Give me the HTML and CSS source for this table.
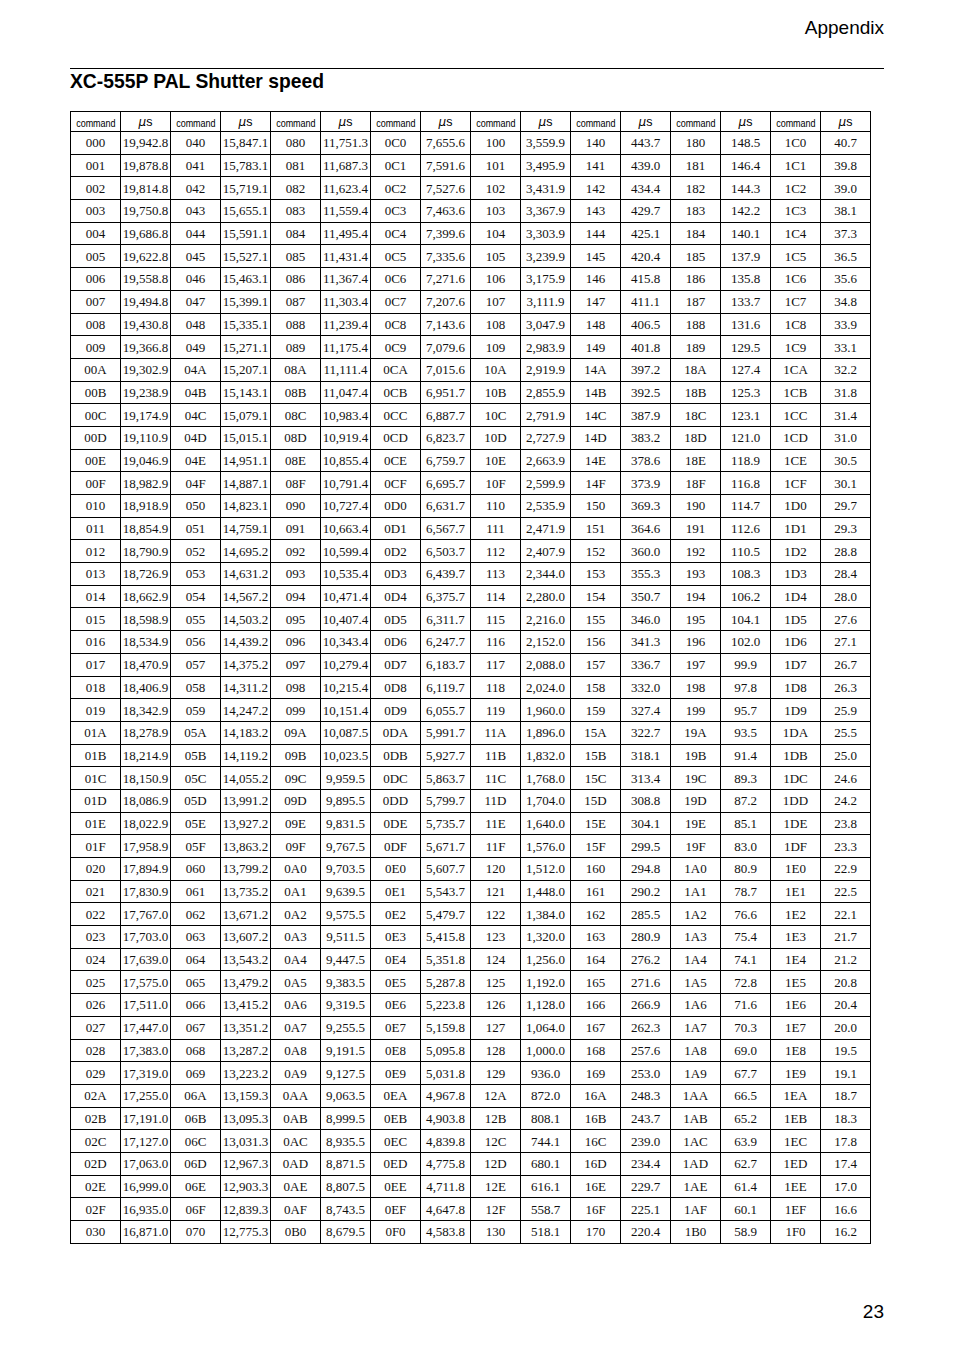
FILE: index.html
```html
<!DOCTYPE html>
<html lang="en">
<head>
<meta charset="utf-8">
<title>XC-555P PAL Shutter speed</title>
<link rel="stylesheet" href="styles.css">
</head>
<body>
<div class="page">
  <header class="running-head">Appendix</header>
  <hr class="rule">
  <h1 class="title">XC-555P PAL Shutter speed</h1>
  <table class="shutter">
    <thead>
      <tr>
        <th><span class="cmd">command</span></th><th class="us"><i>μ</i>s</th>
        <th><span class="cmd">command</span></th><th class="us"><i>μ</i>s</th>
        <th><span class="cmd">command</span></th><th class="us"><i>μ</i>s</th>
        <th><span class="cmd">command</span></th><th class="us"><i>μ</i>s</th>
        <th><span class="cmd">command</span></th><th class="us"><i>μ</i>s</th>
        <th><span class="cmd">command</span></th><th class="us"><i>μ</i>s</th>
        <th><span class="cmd">command</span></th><th class="us"><i>μ</i>s</th>
        <th><span class="cmd">command</span></th><th class="us"><i>μ</i>s</th>
      </tr>
    </thead>
    <tbody>
<tr><td>000</td><td>19,942.8</td><td>040</td><td>15,847.1</td><td>080</td><td>11,751.3</td><td>0C0</td><td>7,655.6</td><td>100</td><td>3,559.9</td><td>140</td><td>443.7</td><td>180</td><td>148.5</td><td>1C0</td><td>40.7</td></tr>
<tr><td>001</td><td>19,878.8</td><td>041</td><td>15,783.1</td><td>081</td><td>11,687.3</td><td>0C1</td><td>7,591.6</td><td>101</td><td>3,495.9</td><td>141</td><td>439.0</td><td>181</td><td>146.4</td><td>1C1</td><td>39.8</td></tr>
<tr><td>002</td><td>19,814.8</td><td>042</td><td>15,719.1</td><td>082</td><td>11,623.4</td><td>0C2</td><td>7,527.6</td><td>102</td><td>3,431.9</td><td>142</td><td>434.4</td><td>182</td><td>144.3</td><td>1C2</td><td>39.0</td></tr>
<tr><td>003</td><td>19,750.8</td><td>043</td><td>15,655.1</td><td>083</td><td>11,559.4</td><td>0C3</td><td>7,463.6</td><td>103</td><td>3,367.9</td><td>143</td><td>429.7</td><td>183</td><td>142.2</td><td>1C3</td><td>38.1</td></tr>
<tr><td>004</td><td>19,686.8</td><td>044</td><td>15,591.1</td><td>084</td><td>11,495.4</td><td>0C4</td><td>7,399.6</td><td>104</td><td>3,303.9</td><td>144</td><td>425.1</td><td>184</td><td>140.1</td><td>1C4</td><td>37.3</td></tr>
<tr><td>005</td><td>19,622.8</td><td>045</td><td>15,527.1</td><td>085</td><td>11,431.4</td><td>0C5</td><td>7,335.6</td><td>105</td><td>3,239.9</td><td>145</td><td>420.4</td><td>185</td><td>137.9</td><td>1C5</td><td>36.5</td></tr>
<tr><td>006</td><td>19,558.8</td><td>046</td><td>15,463.1</td><td>086</td><td>11,367.4</td><td>0C6</td><td>7,271.6</td><td>106</td><td>3,175.9</td><td>146</td><td>415.8</td><td>186</td><td>135.8</td><td>1C6</td><td>35.6</td></tr>
<tr><td>007</td><td>19,494.8</td><td>047</td><td>15,399.1</td><td>087</td><td>11,303.4</td><td>0C7</td><td>7,207.6</td><td>107</td><td>3,111.9</td><td>147</td><td>411.1</td><td>187</td><td>133.7</td><td>1C7</td><td>34.8</td></tr>
<tr><td>008</td><td>19,430.8</td><td>048</td><td>15,335.1</td><td>088</td><td>11,239.4</td><td>0C8</td><td>7,143.6</td><td>108</td><td>3,047.9</td><td>148</td><td>406.5</td><td>188</td><td>131.6</td><td>1C8</td><td>33.9</td></tr>
<tr><td>009</td><td>19,366.8</td><td>049</td><td>15,271.1</td><td>089</td><td>11,175.4</td><td>0C9</td><td>7,079.6</td><td>109</td><td>2,983.9</td><td>149</td><td>401.8</td><td>189</td><td>129.5</td><td>1C9</td><td>33.1</td></tr>
<tr><td>00A</td><td>19,302.9</td><td>04A</td><td>15,207.1</td><td>08A</td><td>11,111.4</td><td>0CA</td><td>7,015.6</td><td>10A</td><td>2,919.9</td><td>14A</td><td>397.2</td><td>18A</td><td>127.4</td><td>1CA</td><td>32.2</td></tr>
<tr><td>00B</td><td>19,238.9</td><td>04B</td><td>15,143.1</td><td>08B</td><td>11,047.4</td><td>0CB</td><td>6,951.7</td><td>10B</td><td>2,855.9</td><td>14B</td><td>392.5</td><td>18B</td><td>125.3</td><td>1CB</td><td>31.8</td></tr>
<tr><td>00C</td><td>19,174.9</td><td>04C</td><td>15,079.1</td><td>08C</td><td>10,983.4</td><td>0CC</td><td>6,887.7</td><td>10C</td><td>2,791.9</td><td>14C</td><td>387.9</td><td>18C</td><td>123.1</td><td>1CC</td><td>31.4</td></tr>
<tr><td>00D</td><td>19,110.9</td><td>04D</td><td>15,015.1</td><td>08D</td><td>10,919.4</td><td>0CD</td><td>6,823.7</td><td>10D</td><td>2,727.9</td><td>14D</td><td>383.2</td><td>18D</td><td>121.0</td><td>1CD</td><td>31.0</td></tr>
<tr><td>00E</td><td>19,046.9</td><td>04E</td><td>14,951.1</td><td>08E</td><td>10,855.4</td><td>0CE</td><td>6,759.7</td><td>10E</td><td>2,663.9</td><td>14E</td><td>378.6</td><td>18E</td><td>118.9</td><td>1CE</td><td>30.5</td></tr>
<tr><td>00F</td><td>18,982.9</td><td>04F</td><td>14,887.1</td><td>08F</td><td>10,791.4</td><td>0CF</td><td>6,695.7</td><td>10F</td><td>2,599.9</td><td>14F</td><td>373.9</td><td>18F</td><td>116.8</td><td>1CF</td><td>30.1</td></tr>
<tr><td>010</td><td>18,918.9</td><td>050</td><td>14,823.1</td><td>090</td><td>10,727.4</td><td>0D0</td><td>6,631.7</td><td>110</td><td>2,535.9</td><td>150</td><td>369.3</td><td>190</td><td>114.7</td><td>1D0</td><td>29.7</td></tr>
<tr><td>011</td><td>18,854.9</td><td>051</td><td>14,759.1</td><td>091</td><td>10,663.4</td><td>0D1</td><td>6,567.7</td><td>111</td><td>2,471.9</td><td>151</td><td>364.6</td><td>191</td><td>112.6</td><td>1D1</td><td>29.3</td></tr>
<tr><td>012</td><td>18,790.9</td><td>052</td><td>14,695.2</td><td>092</td><td>10,599.4</td><td>0D2</td><td>6,503.7</td><td>112</td><td>2,407.9</td><td>152</td><td>360.0</td><td>192</td><td>110.5</td><td>1D2</td><td>28.8</td></tr>
<tr><td>013</td><td>18,726.9</td><td>053</td><td>14,631.2</td><td>093</td><td>10,535.4</td><td>0D3</td><td>6,439.7</td><td>113</td><td>2,344.0</td><td>153</td><td>355.3</td><td>193</td><td>108.3</td><td>1D3</td><td>28.4</td></tr>
<tr><td>014</td><td>18,662.9</td><td>054</td><td>14,567.2</td><td>094</td><td>10,471.4</td><td>0D4</td><td>6,375.7</td><td>114</td><td>2,280.0</td><td>154</td><td>350.7</td><td>194</td><td>106.2</td><td>1D4</td><td>28.0</td></tr>
<tr><td>015</td><td>18,598.9</td><td>055</td><td>14,503.2</td><td>095</td><td>10,407.4</td><td>0D5</td><td>6,311.7</td><td>115</td><td>2,216.0</td><td>155</td><td>346.0</td><td>195</td><td>104.1</td><td>1D5</td><td>27.6</td></tr>
<tr><td>016</td><td>18,534.9</td><td>056</td><td>14,439.2</td><td>096</td><td>10,343.4</td><td>0D6</td><td>6,247.7</td><td>116</td><td>2,152.0</td><td>156</td><td>341.3</td><td>196</td><td>102.0</td><td>1D6</td><td>27.1</td></tr>
<tr><td>017</td><td>18,470.9</td><td>057</td><td>14,375.2</td><td>097</td><td>10,279.4</td><td>0D7</td><td>6,183.7</td><td>117</td><td>2,088.0</td><td>157</td><td>336.7</td><td>197</td><td>99.9</td><td>1D7</td><td>26.7</td></tr>
<tr><td>018</td><td>18,406.9</td><td>058</td><td>14,311.2</td><td>098</td><td>10,215.4</td><td>0D8</td><td>6,119.7</td><td>118</td><td>2,024.0</td><td>158</td><td>332.0</td><td>198</td><td>97.8</td><td>1D8</td><td>26.3</td></tr>
<tr><td>019</td><td>18,342.9</td><td>059</td><td>14,247.2</td><td>099</td><td>10,151.4</td><td>0D9</td><td>6,055.7</td><td>119</td><td>1,960.0</td><td>159</td><td>327.4</td><td>199</td><td>95.7</td><td>1D9</td><td>25.9</td></tr>
<tr><td>01A</td><td>18,278.9</td><td>05A</td><td>14,183.2</td><td>09A</td><td>10,087.5</td><td>0DA</td><td>5,991.7</td><td>11A</td><td>1,896.0</td><td>15A</td><td>322.7</td><td>19A</td><td>93.5</td><td>1DA</td><td>25.5</td></tr>
<tr><td>01B</td><td>18,214.9</td><td>05B</td><td>14,119.2</td><td>09B</td><td>10,023.5</td><td>0DB</td><td>5,927.7</td><td>11B</td><td>1,832.0</td><td>15B</td><td>318.1</td><td>19B</td><td>91.4</td><td>1DB</td><td>25.0</td></tr>
<tr><td>01C</td><td>18,150.9</td><td>05C</td><td>14,055.2</td><td>09C</td><td>9,959.5</td><td>0DC</td><td>5,863.7</td><td>11C</td><td>1,768.0</td><td>15C</td><td>313.4</td><td>19C</td><td>89.3</td><td>1DC</td><td>24.6</td></tr>
<tr><td>01D</td><td>18,086.9</td><td>05D</td><td>13,991.2</td><td>09D</td><td>9,895.5</td><td>0DD</td><td>5,799.7</td><td>11D</td><td>1,704.0</td><td>15D</td><td>308.8</td><td>19D</td><td>87.2</td><td>1DD</td><td>24.2</td></tr>
<tr><td>01E</td><td>18,022.9</td><td>05E</td><td>13,927.2</td><td>09E</td><td>9,831.5</td><td>0DE</td><td>5,735.7</td><td>11E</td><td>1,640.0</td><td>15E</td><td>304.1</td><td>19E</td><td>85.1</td><td>1DE</td><td>23.8</td></tr>
<tr><td>01F</td><td>17,958.9</td><td>05F</td><td>13,863.2</td><td>09F</td><td>9,767.5</td><td>0DF</td><td>5,671.7</td><td>11F</td><td>1,576.0</td><td>15F</td><td>299.5</td><td>19F</td><td>83.0</td><td>1DF</td><td>23.3</td></tr>
<tr><td>020</td><td>17,894.9</td><td>060</td><td>13,799.2</td><td>0A0</td><td>9,703.5</td><td>0E0</td><td>5,607.7</td><td>120</td><td>1,512.0</td><td>160</td><td>294.8</td><td>1A0</td><td>80.9</td><td>1E0</td><td>22.9</td></tr>
<tr><td>021</td><td>17,830.9</td><td>061</td><td>13,735.2</td><td>0A1</td><td>9,639.5</td><td>0E1</td><td>5,543.7</td><td>121</td><td>1,448.0</td><td>161</td><td>290.2</td><td>1A1</td><td>78.7</td><td>1E1</td><td>22.5</td></tr>
<tr><td>022</td><td>17,767.0</td><td>062</td><td>13,671.2</td><td>0A2</td><td>9,575.5</td><td>0E2</td><td>5,479.7</td><td>122</td><td>1,384.0</td><td>162</td><td>285.5</td><td>1A2</td><td>76.6</td><td>1E2</td><td>22.1</td></tr>
<tr><td>023</td><td>17,703.0</td><td>063</td><td>13,607.2</td><td>0A3</td><td>9,511.5</td><td>0E3</td><td>5,415.8</td><td>123</td><td>1,320.0</td><td>163</td><td>280.9</td><td>1A3</td><td>75.4</td><td>1E3</td><td>21.7</td></tr>
<tr><td>024</td><td>17,639.0</td><td>064</td><td>13,543.2</td><td>0A4</td><td>9,447.5</td><td>0E4</td><td>5,351.8</td><td>124</td><td>1,256.0</td><td>164</td><td>276.2</td><td>1A4</td><td>74.1</td><td>1E4</td><td>21.2</td></tr>
<tr><td>025</td><td>17,575.0</td><td>065</td><td>13,479.2</td><td>0A5</td><td>9,383.5</td><td>0E5</td><td>5,287.8</td><td>125</td><td>1,192.0</td><td>165</td><td>271.6</td><td>1A5</td><td>72.8</td><td>1E5</td><td>20.8</td></tr>
<tr><td>026</td><td>17,511.0</td><td>066</td><td>13,415.2</td><td>0A6</td><td>9,319.5</td><td>0E6</td><td>5,223.8</td><td>126</td><td>1,128.0</td><td>166</td><td>266.9</td><td>1A6</td><td>71.6</td><td>1E6</td><td>20.4</td></tr>
<tr><td>027</td><td>17,447.0</td><td>067</td><td>13,351.2</td><td>0A7</td><td>9,255.5</td><td>0E7</td><td>5,159.8</td><td>127</td><td>1,064.0</td><td>167</td><td>262.3</td><td>1A7</td><td>70.3</td><td>1E7</td><td>20.0</td></tr>
<tr><td>028</td><td>17,383.0</td><td>068</td><td>13,287.2</td><td>0A8</td><td>9,191.5</td><td>0E8</td><td>5,095.8</td><td>128</td><td>1,000.0</td><td>168</td><td>257.6</td><td>1A8</td><td>69.0</td><td>1E8</td><td>19.5</td></tr>
<tr><td>029</td><td>17,319.0</td><td>069</td><td>13,223.2</td><td>0A9</td><td>9,127.5</td><td>0E9</td><td>5,031.8</td><td>129</td><td>936.0</td><td>169</td><td>253.0</td><td>1A9</td><td>67.7</td><td>1E9</td><td>19.1</td></tr>
<tr><td>02A</td><td>17,255.0</td><td>06A</td><td>13,159.3</td><td>0AA</td><td>9,063.5</td><td>0EA</td><td>4,967.8</td><td>12A</td><td>872.0</td><td>16A</td><td>248.3</td><td>1AA</td><td>66.5</td><td>1EA</td><td>18.7</td></tr>
<tr><td>02B</td><td>17,191.0</td><td>06B</td><td>13,095.3</td><td>0AB</td><td>8,999.5</td><td>0EB</td><td>4,903.8</td><td>12B</td><td>808.1</td><td>16B</td><td>243.7</td><td>1AB</td><td>65.2</td><td>1EB</td><td>18.3</td></tr>
<tr><td>02C</td><td>17,127.0</td><td>06C</td><td>13,031.3</td><td>0AC</td><td>8,935.5</td><td>0EC</td><td>4,839.8</td><td>12C</td><td>744.1</td><td>16C</td><td>239.0</td><td>1AC</td><td>63.9</td><td>1EC</td><td>17.8</td></tr>
<tr><td>02D</td><td>17,063.0</td><td>06D</td><td>12,967.3</td><td>0AD</td><td>8,871.5</td><td>0ED</td><td>4,775.8</td><td>12D</td><td>680.1</td><td>16D</td><td>234.4</td><td>1AD</td><td>62.7</td><td>1ED</td><td>17.4</td></tr>
<tr><td>02E</td><td>16,999.0</td><td>06E</td><td>12,903.3</td><td>0AE</td><td>8,807.5</td><td>0EE</td><td>4,711.8</td><td>12E</td><td>616.1</td><td>16E</td><td>229.7</td><td>1AE</td><td>61.4</td><td>1EE</td><td>17.0</td></tr>
<tr><td>02F</td><td>16,935.0</td><td>06F</td><td>12,839.3</td><td>0AF</td><td>8,743.5</td><td>0EF</td><td>4,647.8</td><td>12F</td><td>558.7</td><td>16F</td><td>225.1</td><td>1AF</td><td>60.1</td><td>1EF</td><td>16.6</td></tr>
<tr><td>030</td><td>16,871.0</td><td>070</td><td>12,775.3</td><td>0B0</td><td>8,679.5</td><td>0F0</td><td>4,583.8</td><td>130</td><td>518.1</td><td>170</td><td>220.4</td><td>1B0</td><td>58.9</td><td>1F0</td><td>16.2</td></tr>
    </tbody>
  </table>
  <footer class="folio">23</footer>
</div>
</body>
</html>
```

FILE: styles.css
```css
html, body {
  margin: 0;
  padding: 0;
  background: #ffffff;
}

body {
  font-family: "Liberation Sans", Arial, sans-serif;
  color: #000000;
}

.page {
  width: 814px;
  margin-left: 70px;
  padding-top: 17px;
}

.running-head {
  text-align: right;
  font-size: 19px;
  line-height: 22px;
  height: 22px;
}

.rule {
  border: 0;
  border-top: 1px solid #000000;
  margin: 29px 0 0 0;
  height: 0;
}

.title {
  font-family: "Liberation Sans", Arial, sans-serif;
  font-weight: bold;
  font-size: 19.3px;
  line-height: 23px;
  margin: 1px 0 18px 0;
}

.shutter {
  border-collapse: collapse;
  table-layout: fixed;
  width: 801px;
}

.shutter th,
.shutter td {
  border: 1px solid #000000;
  padding: 0;
  text-align: center;
  vertical-align: middle;
  white-space: nowrap;
  overflow: visible;
}

.shutter thead tr {
  height: 20px;
}

.shutter th {
  font-weight: normal;
  font-family: "Liberation Sans", Arial, sans-serif;
  height: 19px;
}

.cmd {
  display: inline-block;
  font-size: 11px;
  transform: scaleX(0.82);
  letter-spacing: -0.1px;
}

.us {
  font-size: 12.5px;
}

.us i {
  font-family: "DejaVu Sans", sans-serif;
  font-style: italic;
  font-size: 12px;
}

.shutter tbody tr {
  height: 22.7px;
}

.shutter td {
  font-family: "Liberation Serif", "Times New Roman", serif;
  font-size: 13px;
  line-height: 15px;
  color: #111111;
}

.folio {
  text-align: right;
  font-size: 19px;
  line-height: 22px;
  margin-top: 57px;
}
```
